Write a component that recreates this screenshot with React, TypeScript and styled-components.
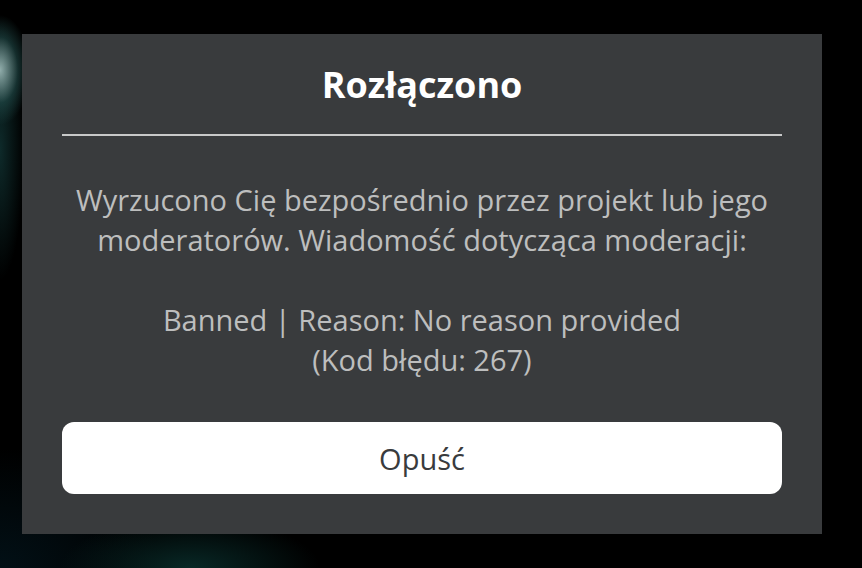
import styled, { createGlobalStyle } from "styled-components";

const GlobalStyle = createGlobalStyle`
  html, body {
    margin: 0;
    padding: 0;
    height: 100%;
  }
  body {
    font-family: "Open Sans", "Noto Sans", sans-serif;
    background: #000;
  }
`;

const App = () => {
  return (
    <>
      <GlobalStyle />
      <Screen>
        <Dialog>
          <Title>Rozłączono</Title>
          <Divider />
          <Message>
            <p>
              Wyrzucono Cię bezpośrednio przez projekt lub jego
              <br />
              moderatorów. Wiadomość dotycząca moderacji:
            </p>
            <p>
              Banned | Reason: No reason provided
              <br />
              (Kod błędu: 267)
            </p>
          </Message>
          <LeaveButton>Opuść</LeaveButton>
        </Dialog>
      </Screen>
    </>
  );
};

export default App;

const Screen = styled.main`
  width: 862px;
  height: 568px;
  box-sizing: border-box;
  padding: 34px 40px 0 22px;
  overflow: hidden;
  background:
    radial-gradient(ellipse 30px 55px at 0px 70px, rgba(160, 190, 188, 0.9), rgba(40, 90, 88, 0.5) 60%, transparent 100%),
    radial-gradient(ellipse 24px 130px at 0px 150px, rgba(20, 60, 60, 0.7), transparent 100%),
    radial-gradient(ellipse 130px 50px at 190px 568px, rgba(8, 40, 38, 1), transparent 100%),
    radial-gradient(ellipse 160px 120px at 0px 568px, rgba(2, 16, 22, 1), transparent 100%),
    #000;
`;

const Dialog = styled.section`
  width: 800px;
  height: 500px;
  box-sizing: border-box;
  background: #393b3d;
  padding: 0 40px 40px;
  display: flex;
  flex-direction: column;
`;

const Title = styled.h1`
  margin: 0;
  height: 100px;
  display: flex;
  align-items: center;
  justify-content: center;
  font-size: 36px;
  font-weight: 700;
  color: #ffffff;
`;

const Divider = styled.hr`
  margin: 0;
  border: none;
  height: 2px;
  background: #c8c9c9;
`;

const Message = styled.div`
  margin-top: 44px;
  color: #bdbebe;
  font-size: 29px;
  line-height: 40px;
  text-align: center;

  p {
    margin: 0;
  }

  p + p {
    margin-top: 40px;
  }
`;

const LeaveButton = styled.button`
  margin-top: 42px;
  height: 72px;
  border: none;
  border-radius: 12px;
  background: #ffffff;
  color: #393b3d;
  font-family: inherit;
  font-size: 29px;
  cursor: pointer;
`;
